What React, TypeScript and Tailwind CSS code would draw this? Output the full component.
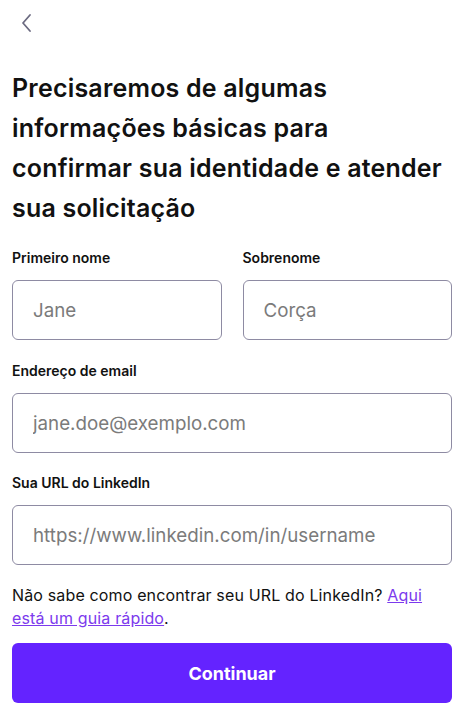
import React from "react";

function Field({ label, placeholder }: { label: string; placeholder: string }) {
  return (
    <label className="flex flex-col flex-1 min-w-0">
      <span className="text-[14px] leading-5 font-semibold text-[#111] mb-3">{label}</span>
      <input
        placeholder={placeholder}
        className="h-[60px] w-full rounded-md border border-[#8e8ba3] bg-white px-5 text-[18.75px] text-[#111] placeholder:text-[#7b7b7b] outline-none"
      />
    </label>
  );
}

export default function App() {
  return (
    <div className="min-h-screen bg-white pl-3 pr-2 font-['Inter',sans-serif] text-[#111]">
      {/* Header */}
      <div className="h-[46px] flex items-center pl-2">
        <svg width="14" height="20" viewBox="0 0 14 20" fill="none" stroke="#6b6a80" strokeWidth="1.8" strokeLinecap="round" strokeLinejoin="round">
          <path d="M10 2 L3 10 L10 18" />
        </svg>
      </div>

      <h1 className="mt-[22px] text-[25px] leading-[40px] font-semibold tracking-[0.2px]">
        Precisaremos de algumas informações básicas para confirmar sua identidade e atender sua solicitação
      </h1>

      <div className="mt-[20px] flex gap-[21px]">
        <Field label="Primeiro nome" placeholder="Jane" />
        <Field label="Sobrenome" placeholder="Corça" />
      </div>

      <div className="mt-[21px]">
        <Field label="Endereço de email" placeholder="jane.doe@exemplo.com" />
      </div>

      <div className="mt-[20px]">
        <Field label="Sua URL do LinkedIn" placeholder="https://www.linkedin.com/in/username" />
      </div>

      <p className="mt-[19px] text-[16px] leading-[23px] tracking-[0.15px]">
        Não sabe como encontrar seu URL do LinkedIn?{" "}
        <a href="#" className="text-[#7c3aed] underline">
          Aqui está um guia rápido
        </a>
        .
      </p>

      <button className="mt-[13px] h-[60px] w-full rounded-md bg-[#6423ff] text-white text-[18px] font-bold">
        Continuar
      </button>
    </div>
  );
}
